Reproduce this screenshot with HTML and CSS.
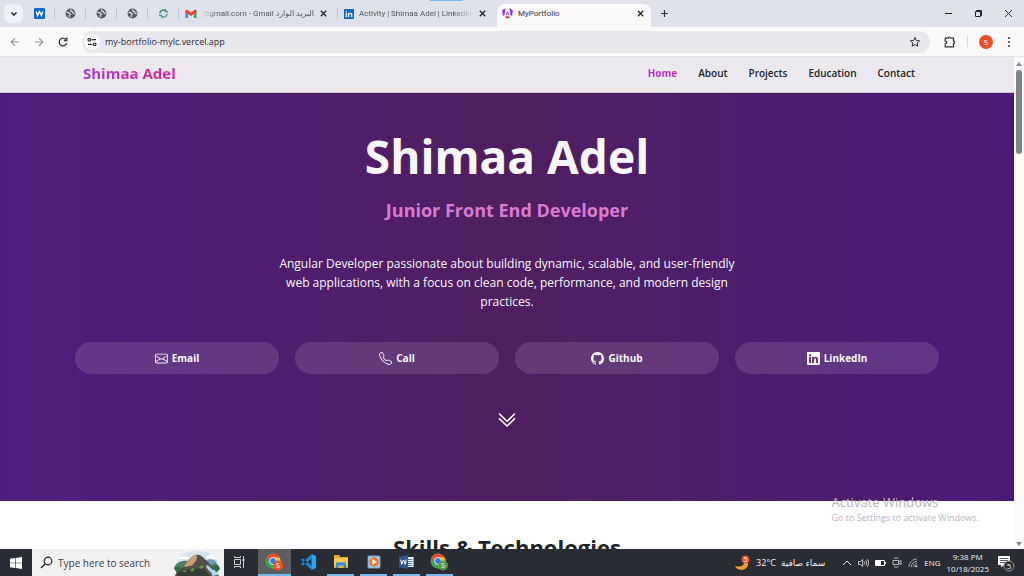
FILE: index.html
```html
<!DOCTYPE html>
<html lang="en">
<head>
  <meta charset="UTF-8" />
  <meta name="viewport" content="width=device-width, initial-scale=1.0"/>
  <title>MyPortfolio</title>
  <link rel="stylesheet" href="styles.css">
</head>
<body>
  <svg class="sprite" aria-hidden="true">
    <symbol id="globe" viewBox="0 0 12 12">
      <circle cx="6" cy="6" r="5.4" fill="#5a5c60"/>
      <path d="M1.6 4.6c1.6 0 2.4 1 3.4 1.2s1 1.4.2 1.8-.4 1.600-.8 2.400M6.600 1.400c-.2 1-.8 1.200-.2 1.900s2.200.2 2.200 1.500 1.200 1.200 2 1" fill="none" stroke="#e0e2ec" stroke-width="1.300"/>
    </symbol>
    <symbol id="close" viewBox="0 0 10 10">
      <path d="M2 2l6 6M8 2L2 8" fill="none" stroke="currentColor" stroke-width="1.400"/>
    </symbol>
    <symbol id="linkedin" viewBox="0 0 16 16">
      <path fill="currentColor" d="M0 1.146C0 .513.526 0 1.175 0h13.65C15.474 0 16 .513 16 1.146v13.708c0 .633-.526 1.146-1.175 1.146H1.175C.526 16 0 15.487 0 14.854zm4.943 12.248V6.169H2.542v7.225zm-1.2-8.212c.837 0 1.358-.554 1.358-1.248-.015-.709-.52-1.248-1.342-1.248S2.4 3.226 2.4 3.934c0 .694.521 1.248 1.327 1.248zm4.908 8.212V9.359c0-.216.016-.432.08-.586.173-.431.568-.878 1.232-.878.869 0 1.216.662 1.216 1.634v3.865h2.401V9.25c0-2.22-1.184-3.252-2.764-3.252-1.274 0-1.845.7-2.165 1.193v.025h-.016l.016-.025V6.169h-2.4c.03.678 0 7.225 0 7.225z"/>
    </symbol>
    <symbol id="chrome" viewBox="0 0 16 16">
      <circle cx="8" cy="8" r="7.500" fill="#34a853"/>
      <path d="M14.500 4.250A7.500 7.500 0 0 1 8 15.500L8 8 8 4.250z" fill="#fbc116"/>
      <path d="M1.500 4.250A7.500 7.500 0 0 1 14.500 4.250H8L5 10z" fill="#ea4a2c"/>
      <circle cx="8" cy="8" r="3.700" fill="#fff"/>
      <circle cx="8" cy="8" r="2.900" fill="#2b7de9"/>
    </symbol>
  </svg>

  <!-- Browser tabs -->
  <div class="tabs">
    <button class="tab-search" aria-label="Search tabs">
      <svg width="8" height="8" viewBox="0 0 8 8"><path d="M1.500 2.500L4 5l2.500-2.500" fill="none" stroke="#1f1f1f" stroke-width="1.500"/></svg>
    </button>
    <button class="tab pinned" aria-label="Word">
      <svg width="11" height="11" viewBox="0 0 11 11"><rect width="11" height="11" rx="1" fill="#1268cf"/><path d="M2.300 3.500l1.300 4 1.900-4 1.900 4 1.300-4" fill="none" stroke="#fff" stroke-width="1.300"/></svg>
    </button>
    <button class="tab pinned" aria-label="Page"><svg width="11" height="11"><use href="#globe"/></svg></button>
    <button class="tab pinned" aria-label="Page"><svg width="11" height="11"><use href="#globe"/></svg></button>
    <button class="tab pinned" aria-label="Page"><svg width="11" height="11"><use href="#globe"/></svg></button>
    <button class="tab pinned" aria-label="Sync">
      <svg width="11" height="11" viewBox="0 0 12 12" fill="none" stroke-width="1.700"><path d="M2 6a4 4 0 0 1 6.500-3" stroke="#3c9a6b"/><path d="M10 6a4 4 0 0 1-6.500 3" stroke="#58a98a"/><path d="M8 1v3h3M4 11V8H1" stroke="#4f7fb8" stroke-width="1.200"/></svg>
    </button>
    <div class="tab">
      <svg width="12" height="10" viewBox="0 0 12 10"><path d="M.5 9V1.500L3 3.200V9z" fill="#4285f4"/><path d="M9 9V3.200l2.500-1.700V9z" fill="#34a853"/><path d="M.5 1.500C1 .5 2 .5 3 1.200l3 2.300 3-2.300c1-.7 2-.7 2.500.3v1.700L6 7 .5 3.200z" fill="#ea4335"/></svg>
      <span class="tab-title fade-left">@gmail.com - Gmail البريد الوارد</span>
      <button class="tab-close" aria-label="Close tab"><svg width="9" height="9"><use href="#close"/></svg></button>
    </div>
    <div class="tab">
      <svg class="blue" width="10" height="10"><use href="#linkedin"/></svg>
      <span class="tab-title fade-right">Activity | Shimaa Adel | LinkedIn</span>
      <button class="tab-close" aria-label="Close tab"><svg width="9" height="9"><use href="#close"/></svg></button>
    </div>
    <div class="tab active">
      <svg width="11" height="11" viewBox="0 0 12 12"><path d="M4 .4L2.800 7 1 9 .2 2.500z" fill="#a32fe0"/><path d="M8 .4L9.200 7 11 9l.8-6.500z" fill="#7b35e8"/><path d="M6 3l2.200 5H6.900L6 5.800 5.100 8H3.800z" fill="#d63bd0"/><path d="M3.500 9h5v1.300L6 11.800l-2.500-1.500z" fill="#ef4056"/></svg>
      <span class="tab-title">MyPortfolio</span>
      <button class="tab-close" aria-label="Close tab"><svg width="9" height="9"><use href="#close"/></svg></button>
    </div>
    <button class="new-tab" aria-label="New tab"><svg width="9" height="9" viewBox="0 0 9 9"><path d="M4.500 1v7M1 4.500h7" stroke="#333" stroke-width="1.200"/></svg></button>
    <div class="window-buttons">
      <button aria-label="Minimize"><svg width="9" height="9" viewBox="0 0 9 9"><path d="M1 4.500h7" stroke="#222"/></svg></button>
      <button aria-label="Restore"><svg width="9" height="9" viewBox="0 0 9 9" fill="none" stroke="#222"><path d="M1.500 2.500h5v5h-5z"/><path d="M2.500 2.500v-1h5v5h-1"/></svg></button>
      <button aria-label="Close"><svg width="9" height="9" viewBox="0 0 9 9"><path d="M1 1l7 7M8 1L1 8" stroke="#333"/></svg></button>
    </div>
    <span class="drag-mark"></span>
  </div>

  <!-- Address bar -->
  <div class="toolbar">
    <button aria-label="Back"><svg width="10" height="10" viewBox="0 0 10 10" fill="none" stroke="#94969b" stroke-width="1.200"><path d="M9 5H1.500M5 1.200L1.200 5 5 8.800"/></svg></button>
    <button aria-label="Forward"><svg width="10" height="10" viewBox="0 0 10 10" fill="none" stroke="#94969b" stroke-width="1.200"><path d="M1 5h7.500M5 1.200L8.800 5 5 8.800"/></svg></button>
    <button aria-label="Reload"><svg width="10" height="10" viewBox="0 0 10 10" fill="none" stroke="#333" stroke-width="1.300"><path d="M8.700 6A3.800 3.800 0 1 1 8 2.600"/><path d="M8.800.6v2.900H5.900"/></svg></button>
    <div class="address">
      <button class="site-info" aria-label="Site information"><svg width="10" height="10" viewBox="0 0 10 10" fill="none" stroke="#333" stroke-width="1.200"><circle cx="2.300" cy="2.700" r="1.300"/><path d="M4.500 2.700h4.500M1 7.300h4.300"/><circle cx="7.700" cy="7.300" r="1.300"/></svg></button>
      <input class="url" type="text" aria-label="Address" value="my-bortfolio-mylc.vercel.app">
      <button aria-label="Bookmark"><svg width="12" height="12" viewBox="0 0 12 12"><path d="M6 1.400l1.300 3.100 3.300.3-2.500 2.200.8 3.300L6 8.500l-2.900 1.800.8-3.300L1.400 4.800l3.300-.3z" fill="none" stroke="#333"/></svg></button>
    </div>
    <button aria-label="Extensions"><svg width="12" height="12" viewBox="0 0 12 12"><path d="M1.200 2.200h3.200a1.200 1.200 0 0 1 2.400 0h2.700v3a1.200 1.200 0 0 1 0 2.400v3.200H1.200V8a1.400 1.400 0 0 0 0-2.800z" fill="none" stroke="#333" stroke-width="1.200"/></svg></button>
    <span class="divider"></span>
    <button class="avatar" aria-label="Profile">S</button>
    <button aria-label="Menu"><svg width="4" height="12" viewBox="0 0 4 12" fill="#333"><circle cx="2" cy="2" r="1"/><circle cx="2" cy="6" r="1"/><circle cx="2" cy="10" r="1"/></svg></button>
  </div>

  <div class="viewport">
    <div class="page">
      <nav class="navbar">
        <a class="brand" href="#home">Shimaa Adel</a>
        <ul class="nav-links">
          <li><a class="current" href="#home">Home</a></li>
          <li><a href="#about">About</a></li>
          <li><a href="#projects">Projects</a></li>
          <li><a href="#education">Education</a></li>
          <li><a href="#contact">Contact</a></li>
        </ul>
      </nav>
      <section class="hero" id="home">
        <h1>Shimaa Adel</h1>
        <h2>Junior Front End Developer</h2>
        <p>Angular Developer passionate about building dynamic, scalable, and user-friendly web applications, with a focus on clean code, performance, and modern design practices.</p>
        <div class="contacts">
          <a href="#email">
            <svg width="13" height="13" viewBox="0 0 16 16" fill="currentColor"><path d="M0 4a2 2 0 0 1 2-2h12a2 2 0 0 1 2 2v8a2 2 0 0 1-2 2H2a2 2 0 0 1-2-2zm2-1a1 1 0 0 0-1 1v.217l7 4.200 7-4.200V4a1 1 0 0 0-1-1zm13 2.383-4.708 2.825L15 11.105zm-.034 6.876-5.640-3.471L8 9.583l-1.326-.795-5.640 3.470A1 1 0 0 0 2 13h12a1 1 0 0 0 .966-.741M1 11.105l4.708-2.897L1 5.383z"/></svg>
            Email
          </a>
          <a href="#call">
            <svg width="13" height="13" viewBox="0 0 16 16" fill="currentColor"><path d="M3.654 1.328a.678.678 0 0 0-1.015-.063L1.605 2.300c-.483.484-.661 1.169-.45 1.770a17.600 17.600 0 0 0 4.168 6.608 17.600 17.600 0 0 0 6.608 4.168c.601.211 1.286.033 1.770-.45l1.034-1.034a.678.678 0 0 0-.063-1.015l-2.307-1.794a.68.68 0 0 0-.58-.122l-2.190.547a1.750 1.750 0 0 1-1.657-.459L5.482 8.062a1.750 1.750 0 0 1-.46-1.657l.548-2.190a.68.68 0 0 0-.122-.58zM1.884.511a1.745 1.745 0 0 1 2.612.163L6.290 2.980c.329.423.445.974.315 1.494l-.547 2.190a.68.68 0 0 0 .178.643l2.457 2.457a.68.68 0 0 0 .644.178l2.189-.547a1.750 1.750 0 0 1 1.494.315l2.306 1.794c.829.645.905 1.870.163 2.611l-1.034 1.034c-.74.74-1.846 1.065-2.877.702a18.600 18.600 0 0 1-7.010-4.420 18.600 18.600 0 0 1-4.420-7.009c-.362-1.030-.037-2.137.703-2.877z"/></svg>
            Call
          </a>
          <a href="#github">
            <svg width="13" height="13" viewBox="0 0 16 16" fill="currentColor"><path d="M8 0C3.580 0 0 3.580 0 8c0 3.540 2.290 6.530 5.470 7.590.4.07.55-.17.55-.38 0-.19-.01-.82-.01-1.490-2.010.37-2.530-.49-2.690-.94-.09-.23-.48-.94-.82-1.130-.28-.15-.68-.52-.01-.53.63-.01 1.080.58 1.230.82.72 1.210 1.870.87 2.330.66.07-.52.28-.87.51-1.070-1.780-.2-3.640-.89-3.640-3.950 0-.87.31-1.590.82-2.150-.08-.2-.36-1.020.08-2.120 0 0 .67-.21 2.200.82.64-.18 1.320-.27 2-.27s1.360.09 2 .27c1.530-1.040 2.200-.82 2.200-.82.44 1.100.16 1.920.08 2.120.51.56.82 1.270.82 2.150 0 3.070-1.870 3.750-3.650 3.950.29.25.54.73.54 1.480 0 1.070-.01 1.930-.01 2.200 0 .21.15.46.55.38A8.010 8.010 0 0 0 16 8c0-4.420-3.580-8-8-8"/></svg>
            Github
          </a>
          <a href="#linkedin-profile">
            <svg width="13" height="13"><use href="#linkedin"/></svg>
            LinkedIn
          </a>
        </div>
        <a class="scroll-down" href="#skills" aria-label="Scroll down">
          <svg width="20" height="20" viewBox="0 0 20 20" fill="none" stroke="#fff" stroke-width="1.600" stroke-linecap="round" stroke-linejoin="round"><path d="M2.500 4L10 11.300 17.500 4M2.500 8.700L10 16l7.500-7.300"/></svg>
        </a>
      </section>
      <section class="skills" id="skills">
        <h2>Skills &amp; Technologies</h2>
      </section>
    </div>
    <div class="scrollbar">
      <span class="arrow up"></span>
      <span class="thumb"></span>
      <span class="arrow down"></span>
    </div>
    <div class="activate">
      <strong>Activate Windows</strong>
      <span>Go to Settings to activate Windows.</span>
    </div>
  </div>

  <!-- Taskbar -->
  <footer class="taskbar">
    <button class="start" aria-label="Start"><svg width="12" height="12" viewBox="0 0 12 12" fill="#fff"><path d="M0 1.700l5.200-.7v4.700H0zM5.800.9L12 0v5.700H5.800zM0 6.300h5.200V11L0 10.300zM5.800 6.300H12V12l-6.200-.9z"/></svg></button>
    <label class="search">
      <svg width="13" height="13" viewBox="0 0 13 13" fill="none" stroke="#222" stroke-width="1.200"><circle cx="8" cy="5" r="3.800"/><path d="M5.300 7.800L1 12"/></svg>
      <input type="text" placeholder="Type here to search" aria-label="Type here to search">
      <svg width="48" height="26" viewBox="0 0 48 26">
        <path d="M3 16C3 5 13 1 24 1s21 4 21 14z" fill="#d5e3ef"/>
        <path d="M5 9c4-4 9-3 12 0zM33 8c3-5 8-4 10 1z" fill="#fff"/>
        <path d="M1 18c2-5 7-8 13-7l22 1c5-1 9 2 11 6l-3 5H4z" fill="#4c7f62"/>
        <path d="M32 11c4-3 9-2 12 1l-6 3z" fill="#6d9bc1"/>
        <path d="M2 26c1-4 5-7 9-10 3-4 6-9 12-11 5-1 7 3 11 6l8 9 4 6z" fill="#4e5149"/>
        <path d="M11 16c3-4 6-9 12-11 2 1 1 5-1 7s-2 4-5 4-4 2-6 0z" fill="#cf9b70"/>
        <path d="M5 23c5-4 9-2 13-4s8 1 12-1l7 8H4z" fill="#353c37"/>
        <path d="M17 20l3-2 2 1-3 3zM26 17l3-2 2 2-3 2zM9 22l3-2 2 2z" fill="#5d9d49"/>
        <path d="M33 15c5 1 4 4 8 5s4 3 4 5l-6 1c1-5-6-5-6-11z" fill="#a6d8f2"/>
        <path d="M1 18l5-2 3 3-5 4zM40 16l4-1 3 4-4 3z" fill="#2c6f47"/>
      </svg>
    </label>
    <button class="task view" aria-label="Task view"><svg width="12" height="12" viewBox="0 0 12 12" fill="none" stroke="#ccc"><path d="M1.500 3.500h6v5h-6zM1.500 0v1.500h6V0M1.500 12v-1.500h6V12M10.500 0v12"/><path d="M9.500 4h2" stroke-width="2"/></svg></button>
    <button class="task running front" aria-label="Chrome"><svg width="19" height="18" viewBox="0 0 19 18"><use href="#chrome" width="16" height="16"/><circle cx="13" cy="12.500" r="5" fill="#ef5428"/><text x="13" y="15" text-anchor="middle" class="badge-text">S</text></svg></button>
    <button class="task" aria-label="Visual Studio Code"><svg width="16" height="16" viewBox="0 0 16 16"><path d="M11.500 0L16 2v12l-4.500 2z" fill="#2aa3f0"/><path d="M11.500 0L1 10l1.500 1.700L12 4.500zM11.500 16L1 6l1.500-1.700L12 11.500z" fill="#1c86d6"/></svg></button>
    <button class="task running" aria-label="File Explorer"><svg width="16" height="14" viewBox="0 0 16 14"><path d="M1 0h5l1.500 2H15v11H1z" fill="#e9a92c"/><path d="M1 3h14v8H1z" fill="#fbc755"/><path d="M3 7.500h10V13h-2.500v-2.500h-5V13H3z" fill="#2e8bd6"/></svg></button>
    <button class="task running" aria-label="Media Player"><svg width="14" height="14" viewBox="0 0 14 14"><rect x="1" y="1" width="12" height="12" rx="1" fill="#a7cdea" stroke="#6ba3d0"/><circle cx="7" cy="7" r="4.700" fill="#f07222"/><path d="M5.300 4v6L10 7z" fill="#fff"/></svg></button>
    <button class="task running" aria-label="Word"><svg width="15" height="14" viewBox="0 0 15 14"><path d="M7 2h7.500v10H7z" fill="#fff"/><path d="M8.500 4.500h5M8.500 6.500h5M8.500 8.500h5M8.500 10.500h5" stroke="#2b579a" stroke-width=".8"/><path d="M0 1.700L9 0v14l-9-1.700z" fill="#2b579a"/><path d="M1.700 4.700l1 4.600L4.500 5l1.700 4.300 1-4.800" fill="none" stroke="#fff"/></svg></button>
    <button class="task running" aria-label="Chrome profile"><svg width="19" height="18" viewBox="0 0 19 18"><use href="#chrome" width="16" height="16"/><circle cx="13" cy="12.500" r="5" fill="#4d9a4f"/><text x="13" y="15" text-anchor="middle" class="badge-text">S</text></svg></button>

    <div class="tray">
      <button class="weather" aria-label="Weather">
        <svg width="17" height="16" viewBox="0 0 17 16"><path d="M10 4c2 6-3 9-9 7 3 6 13 5 13-3z" fill="#f7a829"/><path d="M1 11c4 2 9 1 10-3l3 .5c0 6-9 8-13 2.500z" fill="#f2982c"/><circle cx="11.500" cy="4.500" r="4" fill="#e8502e"/><text x="11.500" y="7" text-anchor="middle" class="badge-text">5</text></svg>
        <span>32°C</span>
        <span lang="ar" dir="rtl">سماء صافية</span>
      </button>
      <button aria-label="Show hidden icons"><svg width="10" height="10" viewBox="0 0 10 10" fill="none" stroke="#eee"><path d="M1 7l4-4 4 4"/></svg></button>
      <button aria-label="Volume"><svg width="11" height="10" viewBox="0 0 11 10" fill="none" stroke="#ddd" stroke-width=".9"><path d="M.5 3.500h2L4.700 1.500v7L2.500 6.500h-2zM6.200 3.500c.7 1 .7 2 0 3M7.800 2.300c1.300 1.800 1.300 3.600 0 5.400M9.200 1.200c2 2.600 2 5 0 7.600"/></svg></button>
      <button aria-label="Battery"><svg width="11" height="8" viewBox="0 0 11 8"><path d="M.5 1.500h9v5h-9z" fill="none" stroke="#fff"/><path d="M1 2h5v4H1zM10 3h1v2h-1z" fill="#fff"/></svg></button>
      <button aria-label="Meet now"><svg width="10" height="11" viewBox="0 0 10 11" fill="none" stroke="#ccc" stroke-width=".9"><path d="M1 3.500h5.500v4H1zM6.500 5L9 3.500v4L6.500 6M2 1.500c1.300-1 3-1 4.500 0M2 9.500c1.300 1 3 1 4.500 0"/></svg></button>
      <button aria-label="Network"><svg width="10" height="10" viewBox="0 0 10 10" fill="none" stroke="#bbb" stroke-width=".9"><path d="M1 9C1 4.500 4.500 1 9 1M3.300 9c0-3.200 2.500-5.700 5.700-5.700M5.600 9c0-2 1.400-3.400 3.400-3.400"/><circle cx="8.200" cy="8.200" r=".8" fill="#fff"/></svg></button>
      <button class="lang">ENG</button>
      <button class="clock"><span>9:38 PM</span><span>10/18/2025</span></button>
      <button class="notifications" aria-label="Notifications"><svg width="18" height="18" viewBox="0 0 18 18"><path d="M1 2h12v9H7l-3 2.500V11H1z" fill="#fff"/><path d="M3 4.500h8M3 6.500h8M3 8.500h5" stroke="#333" stroke-width=".8"/><circle cx="12" cy="12" r="5" fill="#2a2c33" stroke="#999"/><text x="12" y="15" text-anchor="middle" class="count-text">5</text></svg></button>
    </div>
  </footer>
</body>
</html>
```
FILE: styles.css
```css
* {
  box-sizing: border-box;
}
body {
  margin: 0;
  height: 100vh;
  display: flex;
  flex-direction: column;
  overflow: hidden;
  font-family: "Open Sans", "Noto Sans", "DejaVu Sans", sans-serif;
  font-size: 9px;
  color: #212529;
}
button {
  display: flex;
  align-items: center;
  justify-content: center;
  padding: 0;
  border: none;
  background: none;
  font: inherit;
  color: inherit;
}
svg {
  display: block;
  flex-shrink: 0;
}
input {
  min-width: 0;
  border: none;
  background: none;
  padding: 0;
  font: inherit;
  color: inherit;
  outline: none;
}
a {
  color: inherit;
  text-decoration: none;
}
.sprite {
  position: absolute;
  width: 0;
  height: 0;
}

/* Tabs */
.tabs {
  position: relative;
  display: flex;
  align-items: center;
  height: 27px;
  flex-shrink: 0;
  background: #dfe2eb;
}
/* thin accent line lying over the top edge */
.drag-mark {
  position: absolute;
  top: 0;
  left: 42%;
  width: 33px;
  height: 1px;
  background: #76b9ed;
}
.tab-search {
  width: 19px;
  height: 19px;
  margin: 0 1px 0 4px;
  border-radius: 6px;
  background: #edf1fb;
}
.tab {
  display: flex;
  align-items: center;
  gap: 5px;
  flex: 0 1 159px;
  min-width: 0;
  height: 27px;
  padding: 0 10px 0 6px;
  font-family: Roboto, "DejaVu Sans", sans-serif;
  font-size: 8px;
  color: #55575c;
}
.tab.pinned {
  flex: 0 0 31px;
  padding: 0;
}
.tab.pinned,
.tab:not(.active) {
  background: linear-gradient(#c3c2ce, #c3c2ce) right center / 1px 11px no-repeat;
}
.tab:has(+ .active) {
  background: none;
}
.tab.active {
  flex-basis: 154px;
  height: 23px;
  align-self: flex-end;
  padding: 0 6px 4px 5px;
  border-radius: 8px 8px 0 0;
  background: #fcf9fb;
  color: #333;
}
.tab-title {
  flex: 1;
  overflow: hidden;
  white-space: nowrap;
}
.fade-left {
  display: flex;
  justify-content: flex-end;
  mask-image: linear-gradient(to right, transparent, #000 16px);
}
.fade-right {
  mask-image: linear-gradient(to left, transparent, #000 20px);
}
.tab-close {
  color: #222;
}
.blue {
  color: #0a66c2;
}
.new-tab {
  width: 27px;
}
.window-buttons {
  display: flex;
  gap: 21px;
  margin-left: auto;
  padding-right: 11px;
}

/* Toolbar */
.toolbar {
  display: flex;
  align-items: center;
  gap: 14px;
  height: 30px;
  flex-shrink: 0;
  padding: 0 13px 0 10px;
  background: #fcf9fb;
  border-bottom: 1px solid #e3e0e6;
}
.address {
  display: flex;
  align-items: center;
  flex: 1;
  height: 22px;
  padding: 0 9px 0 2px;
  border-radius: 11px;
  background: #e9e8ed;
}
.site-info {
  width: 16px;
  height: 16px;
  margin-right: 5px;
  border-radius: 50%;
  background: #fcfafc;
}
.url {
  flex: 1;
  color: #2c2e33;
}
.divider {
  width: 1px;
  height: 11px;
  margin: 0 -3px;
  background: #cfdcf3;
}
.avatar {
  width: 14px;
  height: 14px;
  border-radius: 50%;
  background: #e8502b;
  color: #fff;
  font-size: 8px;
}

/* Page */
.viewport {
  position: relative;
  display: flex;
  flex: 1;
  min-height: 0;
}
.page {
  flex: 1;
  overflow: hidden;
  background: #fff;
}
.navbar {
  display: flex;
  align-items: center;
  justify-content: space-between;
  height: 36px;
  padding: 0 99px 4px 83px;
  background: #ebe8ee;
  border-bottom: 1px solid #c9c6d0;
}
.brand {
  font-size: 15px;
  line-height: 20px;
  font-weight: 700;
  background: linear-gradient(90deg, #a23be0, #d12c9c 60%);
  background-clip: text;
  color: transparent;
}
.nav-links {
  display: flex;
  gap: 21px;
  margin: 0;
  padding: 0;
  list-style: none;
  font-size: 10px;
  font-weight: 600;
}
.nav-links .current {
  font-weight: 700;
  background: linear-gradient(90deg, #a82ed6, #cf2ba6);
  background-clip: text;
  color: transparent;
}
.hero {
  display: flex;
  flex-direction: column;
  align-items: center;
  height: 408px;
  padding: 31px 75px 0;
  background: linear-gradient(90deg, #4e1c7e, #501f60 50%, #4a1a79);
  color: #f8f7fb;
  text-align: center;
}
.hero h1 {
  margin: 0;
  font-size: 46px;
  line-height: 64px;
}
.hero h2 {
  margin: 8px 0 30px;
  font-size: 18px;
  line-height: 28px;
  color: #d97bd3;
}
.hero p {
  max-width: 480px;
  margin: 0;
  font-size: 12px;
  line-height: 19px;
}
.contacts {
  display: grid;
  grid-template-columns: repeat(4, 1fr);
  gap: 16px;
  width: 100%;
  margin-top: 31px;
}
.contacts a {
  display: flex;
  align-items: center;
  justify-content: center;
  gap: 4px;
  height: 32px;
  border-radius: 16px;
  background: rgba(255, 255, 255, 0.12);
  font-size: 10px;
  font-weight: 700;
}
.scroll-down {
  margin-top: 36px;
}
.skills h2 {
  margin: 0;
  padding-top: 30px;
  font-size: 22px;
  line-height: 32px;
  text-align: center;
}
.scrollbar {
  display: flex;
  flex-direction: column;
  align-items: center;
  width: 10px;
  padding: 5px 0 3px;
  background: #fcfafc;
}
.arrow {
  border: 3px solid transparent;
}
.arrow.up {
  border-top: none;
  border-bottom: 4px solid #85898f;
}
.arrow.down {
  margin-top: auto;
  border-bottom: none;
  border-top: 4px solid #85898f;
}
.thumb {
  width: 6px;
  height: 84px;
  margin-top: 4px;
  border-radius: 3px;
  background: #7f868c;
}

/* Watermark over the page */
.activate {
  position: absolute;
  right: 45px;
  bottom: 24px;
  display: flex;
  flex-direction: column;
  color: #b9b4bf;
}
.activate strong {
  font-size: 13px;
  font-weight: 400;
  line-height: 16px;
}
.activate span {
  line-height: 15px;
}

/* Taskbar */
.taskbar {
  display: flex;
  height: 27px;
  flex-shrink: 0;
  background: #2a2c33;
  color: #f1f1f3;
}
.start {
  width: 32px;
}
.search {
  display: flex;
  align-items: center;
  gap: 5px;
  width: 192px;
  padding: 0 3px 0 8px;
  background: #f1f1f2;
  color: #444;
  font-size: 10px;
}
.search input {
  flex: 1;
}
.search input::placeholder {
  color: #3f4044;
}
.task {
  width: 33px;
  border-bottom: 2px solid transparent;
}
.task.view {
  width: 34px;
  padding-right: 4px;
}
.task.running {
  border-image: linear-gradient(90deg, transparent 9%, #76b9ed 9%, #76b9ed 91%, transparent 91%) 0 0 2;
}
.task.front {
  border-image: none;
  border-bottom-color: #76b9ed;
  background: #5c5e61;
}
.badge-text {
  font-size: 7px;
  fill: #fff;
}
.count-text {
  font-size: 8px;
  fill: #fff;
}
.tray {
  display: flex;
  align-items: center;
  gap: 6px;
  margin-left: auto;
  padding-right: 9px;
}
.weather {
  gap: 5px;
  margin-right: 11px;
}
.lang {
  font-size: 8px;
}
.clock {
  flex-direction: column;
  font-size: 8px;
  line-height: 12px;
}
.notifications {
  margin-left: 2px;
}
```
